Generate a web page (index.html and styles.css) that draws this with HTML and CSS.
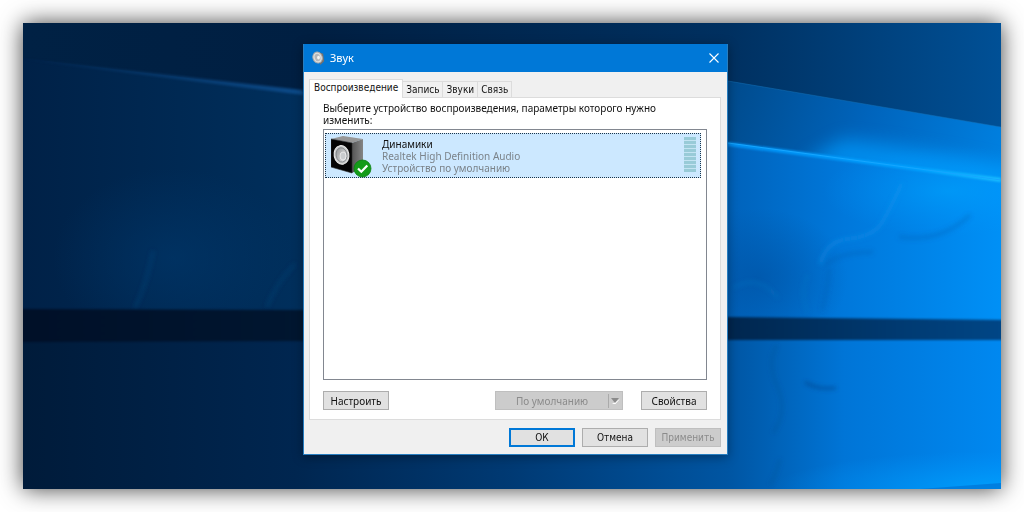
FILE: index.html
```html
<!DOCTYPE html>
<html lang="ru">
<head>
<meta charset="utf-8">
<title>Звук</title>
<link rel="stylesheet" href="styles.css">
</head>
<body>
<main class="desktop">
  <svg class="wallpaper" viewBox="0 0 978 466" preserveAspectRatio="none" aria-hidden="true">
    <defs>
      <linearGradient id="sky"><stop offset="0" stop-color="#002144"/><stop offset=".3" stop-color="#001f42"/><stop offset=".72" stop-color="#003060"/><stop offset="1" stop-color="#005096"/></linearGradient>
      <linearGradient id="pane"><stop offset="0" stop-color="#002147"/><stop offset=".28" stop-color="#002f5c"/><stop offset=".5" stop-color="#004486"/><stop offset=".73" stop-color="#0064bd"/><stop offset=".84" stop-color="#0078db"/><stop offset="1" stop-color="#0090f6"/></linearGradient>
      <linearGradient id="low"><stop offset="0" stop-color="#001b3a"/><stop offset=".28" stop-color="#002650"/><stop offset=".5" stop-color="#003a74"/><stop offset=".72" stop-color="#0055a2"/><stop offset=".84" stop-color="#0075d7"/><stop offset="1" stop-color="#0088f0"/></linearGradient>
      <linearGradient id="bar" x1="0" y1="300" x2="978" y2="300" gradientUnits="userSpaceOnUse"><stop offset="0" stop-color="#001028"/><stop offset=".28" stop-color="#001630"/><stop offset=".72" stop-color="#00264e"/><stop offset="1" stop-color="#004686"/></linearGradient>
      <linearGradient id="beam" x1="705" y1="70" x2="978" y2="140" gradientUnits="userSpaceOnUse"><stop offset="0" stop-color="#004b8d"/><stop offset=".5" stop-color="#0064bc"/><stop offset="1" stop-color="#0080e0"/></linearGradient>
      <linearGradient id="line"><stop offset="0" stop-color="#0090f4"/><stop offset=".7" stop-color="#00a2ff"/><stop offset="1" stop-color="#1cc0ff"/></linearGradient>
      <linearGradient id="ray"><stop offset="0" stop-color="#0b3f76" stop-opacity="0"/><stop offset="1" stop-color="#0c4a88"/></linearGradient>
      <radialGradient id="glow"><stop offset="0" stop-color="#00a6ff"/><stop offset="1" stop-color="#0098ff" stop-opacity="0"/></radialGradient>
      <radialGradient id="haze"><stop offset="0" stop-color="#003a70" stop-opacity=".5"/><stop offset="1" stop-color="#003a70" stop-opacity="0"/></radialGradient>
      <radialGradient id="shade"><stop offset="0" stop-color="#0050a0" stop-opacity=".6"/><stop offset="1" stop-color="#0050a0" stop-opacity="0"/></radialGradient>
      <filter id="soft" x="-20%" y="-50%" width="140%" height="200%"><feGaussianBlur stdDeviation="2"/></filter>
      <filter id="wide" x="-20%" y="-50%" width="140%" height="200%"><feGaussianBlur stdDeviation="9"/></filter>
      <filter id="edge" x="-2%" y="-20%" width="104%" height="140%" color-interpolation-filters="sRGB"><feGaussianBlur stdDeviation="1"/></filter>
      <clipPath id="beam-clip"><path d="M600 42L705 58L978 104V157L705 120L600 108Z"/></clipPath>
    </defs>
    <rect width="978" height="466" fill="url(#sky)"/>
    <path d="M0 35L280 69L705 120L978 157V300H0Z" fill="url(#pane)"/>
    <path d="M600 42L705 58L978 104V157L705 120L600 108Z" fill="url(#beam)"/>
    <g clip-path="url(#beam-clip)"><path d="M820 116Q910 126 1010 150V185L780 140Z" fill="#009cff" opacity=".7" filter="url(#wide)"/></g>
    <path d="M705 58L978 104" fill="none" stroke="#1471b8" opacity=".5"/>
    <path d="M0 35L280 67V72L0 37Z" fill="url(#ray)" filter="url(#edge)"/>
    <ellipse cx="925" cy="168" rx="125" ry="45" fill="url(#glow)" opacity=".5"/>
    <ellipse cx="150" cy="235" rx="120" ry="90" fill="url(#haze)"/>
    <ellipse cx="735" cy="255" rx="90" ry="70" fill="url(#shade)"/>
    <path d="M705 119L978 155V159L705 123Z" fill="url(#line)" filter="url(#edge)"/>
    <path d="M705 120L978 157" fill="none" stroke="#16a6ff"/>
    <g fill="none" filter="url(#soft)">
      <path d="M797 241Q804 218 824 216Q851 214 860 198T879 160" stroke="#1996ed" stroke-width="4" opacity=".35"/>
      <path d="M802 243Q812 230 850 229M806 246Q805 265 799 287M876 214Q918 220 947 192" stroke="#005cae" stroke-width="4" opacity=".3"/>
      <path d="M710 265Q735 250 755 275M785 252Q776 269 785 290" stroke="#1879c6" stroke-width="3" opacity=".3"/>
      <path d="M244 284Q253 260 272 241M130 228Q124 260 112 285" stroke="#0c4a80" stroke-width="3" opacity=".4"/>
    </g>
    <path d="M0 312H978V466H0Z" fill="url(#low)"/>
    <ellipse cx="978" cy="466" rx="230" ry="38" fill="url(#glow)" opacity=".75"/>
    <path d="M897 466L978 460V466Z" fill="#006dce" opacity=".6"/>
    <g fill="none" filter="url(#soft)">
      <path d="M782 359Q792 367 813 365" stroke="#00438c" stroke-width="3" opacity=".6"/>
      <path d="M754 322Q743 340 755 365Q765 389 750 410M757 436Q753 452 747 462" stroke="#004b91" stroke-width="4" opacity=".25"/>
    </g>
    <path d="M-10 286L280 287L705 294L988 297V317H705L280 318L-10 319Z" fill="url(#bar)" filter="url(#edge)"/>
  </svg>

  <section class="dialog" aria-labelledby="dialog-title">
    <header class="titlebar">
      <svg class="title-icon" viewBox="0 0 14 16" aria-hidden="true">
        <path d="M7 1L12 3L13 11L9 15Z" fill="#77716c"/>
        <ellipse cx="6" cy="7" rx="5" ry="6" transform="rotate(-18 6 7)" fill="#dededb" stroke="#a8a9aa"/>
        <ellipse cx="6" cy="7" rx="3" ry="4" transform="rotate(-18 6 7)" fill="#b3b6b9"/>
        <ellipse cx="7" cy="7" rx="1.5" ry="2" fill="#f4f4f2"/>
      </svg>
      <h1 class="title" id="dialog-title">Звук</h1>
      <button class="close" type="button" aria-label="Закрыть">
        <svg class="close-icon" viewBox="0 0 10 10" aria-hidden="true"><path d="M.5 .5L9.5 9.5M9.5 .5L.5 9.5" fill="none" stroke="#fff" stroke-width="1.1"/></svg>
      </button>
    </header>

    <div class="body">
      <div class="tabs" role="tablist">
        <button class="tab tab-active" type="button" role="tab" aria-selected="true">Воспроизведение</button>
        <button class="tab" type="button" role="tab" aria-selected="false">Запись</button>
        <button class="tab" type="button" role="tab" aria-selected="false">Звуки</button>
        <button class="tab" type="button" role="tab" aria-selected="false">Связь</button>
      </div>

      <div class="panel" role="tabpanel">
        <p class="hint">Выберите устройство воспроизведения, параметры которого нужно изменить:</p>
        <div class="devices">
          <div class="device">
            <svg class="device-icon" viewBox="0 0 42 44" aria-hidden="true">
              <defs>
                <linearGradient id="side"><stop offset="0" stop-color="#555"/><stop offset="1" stop-color="#858585"/></linearGradient>
                <linearGradient id="cone" x2="1" y2="1"><stop offset="0" stop-color="#8d9092"/><stop offset="1" stop-color="#f2f2f2"/></linearGradient>
              </defs>
              <path d="M0 5L12 2L32 5L21 9Z" fill="#979797"/>
              <path d="M21 9L32 5V33L21 39Z" fill="url(#side)"/>
              <path d="M0 5L21 9V39L0 33Z" fill="#050505" stroke="#2c2c2c" stroke-width=".6"/>
              <ellipse cx="10.5" cy="21" rx="7.4" ry="9.4" transform="rotate(-10 10 21)" fill="#c8caca" stroke="#eee"/>
              <ellipse cx="10.5" cy="21" rx="5.4" ry="7.2" transform="rotate(-10 10 21)" fill="url(#cone)" stroke="#777c80" stroke-width=".8"/>
              <ellipse cx="12" cy="22" rx="3" ry="4" fill="#c9ccce" stroke="#f5f5f5" stroke-width=".7"/>
              <circle cx="31.5" cy="34.5" r="8.5" fill="#149b18" stroke="#0a7f10" stroke-width=".8"/>
              <path d="M27 34.5L30.3 37.8L36.3 31.5" fill="none" stroke="#fff" stroke-width="2.2"/>
            </svg>
            <div class="device-text">
              <span class="device-name">Динамики</span>
              <span>Realtek High Definition Audio</span>
              <span>Устройство по умолчанию</span>
            </div>
            <div class="meter"></div>
          </div>
        </div>
        <div class="actions">
          <button class="btn" type="button">Настроить</button>
          <button class="btn btn-split" type="button" disabled>
            <span class="split-label">По умолчанию</span>
            <span class="split-arrow"><svg class="arrow-icon" viewBox="0 0 9 6" aria-hidden="true"><path d="M1 6L4.5 6L9 1Z" fill="#fff"/><path d="M0 0H8L4 5Z" fill="#8b8b8b"/></svg></span>
          </button>
          <button class="btn" type="button">Свойства</button>
        </div>
      </div>

      <footer class="footer">
        <button class="btn btn-default" type="button">ОК</button>
        <button class="btn" type="button">Отмена</button>
        <button class="btn" type="button" disabled>Применить</button>
      </footer>
    </div>
  </section>
</main>
</body>
</html>
```
FILE: styles.css
```css
* {
  box-sizing: border-box;
}

body {
  margin: 0;
  min-height: 100vh;
  padding: 23px;
  display: flex;
  background: #fff;
  color: #111;
  font: 10px/12px "Noto Sans", "Open Sans", sans-serif;
}

button {
  font: inherit;
  color: inherit;
}

.desktop {
  position: relative;
  flex: 1;
  display: flex;
  justify-content: center;
  align-items: flex-start;
  padding: 21px 0 21px 7px;
  background: #002147;
  box-shadow: 0 0 22px rgba(0, 0, 0, 0.75);
}

.wallpaper {
  position: absolute;
  inset: 0;
  width: 100%;
  height: 100%;
}

.dialog {
  position: relative;
  width: 100%;
  max-width: 425px;
  background: #f0f0f0;
  border: 1px solid #287ec0;
  border-top: 0;
  box-shadow: 0 2px 10px rgba(0, 0, 0, 0.35);
}

.titlebar {
  display: flex;
  align-items: center;
  height: 28px;
  padding: 0 8px;
  background: #0078d7;
  color: #fff;
}

.title-icon {
  width: 13px;
  height: 15px;
}

.title {
  flex: 1;
  margin: 0 0 0 5px;
  font-size: 11px;
  font-weight: 400;
}

.close {
  display: flex;
  padding: 0;
  border: 0;
  background: none;
}

.close-icon {
  width: 10px;
  height: 10px;
}

.body {
  padding: 7px 6px 7px 5px;
}

.tabs {
  display: flex;
  align-items: flex-end;
  font-family: "DejaVu Sans Condensed", "DejaVu Sans", sans-serif;
}

.tab {
  height: 16px;
  padding: 0 3px;
  border: 1px solid #dcdcdc;
  border-width: 1px 1px 0 0;
  background: #f0f0f0;
}

.tab-active {
  position: relative;
  height: 19px;
  padding: 0 4px 2px;
  margin-bottom: -1px;
  border-left-width: 1px;
  background: #fff;
}

.panel {
  padding: 4px 13px 9px;
  border: 1px solid #dcdcdc;
  background: #fff;
}

.hint {
  margin: 0 0 3px;
}

.devices {
  min-height: 251px;
  padding: 3px 5px 3px 1px;
  border: 1px solid #828790;
}

.device {
  display: flex;
  align-items: flex-start;
  height: 45px;
  padding: 0 4px 0 5px;
  border: 1px dotted #1c3448;
  background: #cce8ff;
}

.device-icon {
  width: 42px;
  height: 44px;
}

.device-text {
  flex: 1;
  display: flex;
  flex-direction: column;
  padding: 4px 0 0 9px;
  color: #7b838a;
}

.device-name {
  color: #111;
}

.meter {
  width: 12px;
  height: 35px;
  margin-top: 3px;
  background: repeating-linear-gradient(#98cbd8 0 3px, #c4e4f3 3px 4px);
}

.actions {
  display: grid;
  grid-template-columns: 1fr auto auto;
  gap: 18px;
  margin-top: 11px;
}

.btn {
  width: 66px;
  height: 19px;
  padding: 0;
  border: 1px solid #adadad;
  background: #e1e1e1;
}

.btn:disabled {
  border-color: #bfbfbf;
  background: #ccc;
  color: #8b8b8b;
}

.btn-split {
  display: flex;
  align-items: center;
  width: 128px;
}

.split-label {
  flex: 1;
}

.split-arrow {
  display: flex;
  padding: 4px 2px;
  border-left: 1px solid #aaa;
}

.arrow-icon {
  width: 9px;
  height: 6px;
}

.btn-default {
  border: 2px solid #0078d7;
}

.footer {
  display: flex;
  justify-content: flex-end;
  gap: 7px;
  padding-top: 8px;
  font-family: "DejaVu Sans Condensed", "DejaVu Sans", sans-serif;
}
```
